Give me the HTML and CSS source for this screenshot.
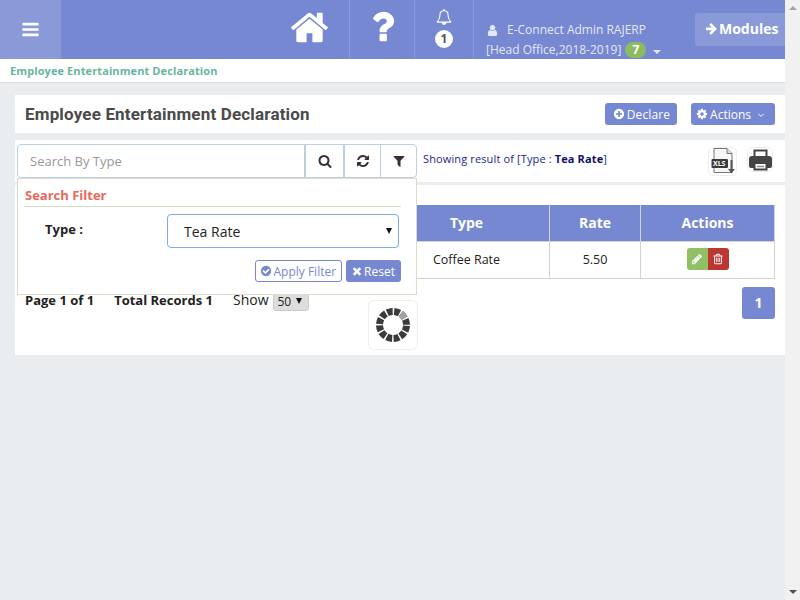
FILE: index.html
```html
<!DOCTYPE html>
<html>
<head>
  <title>Employee Entertainment Declaration</title>
  <link rel="stylesheet" href="styles.css">
</head>
<body>
  <svg class="defs" width="0" height="0">
    <symbol id="i-bars" viewBox="0 0 1792 1792"><path d="M1664 1344v128q0 26-19 45t-45 19h-1408q-26 0-45-19t-19-45v-128q0-26 19-45t45-19h1408q26 0 45 19t19 45zm0-512v128q0 26-19 45t-45 19h-1408q-26 0-45-19t-19-45v-128q0-26 19-45t45-19h1408q26 0 45 19t19 45zm0-512v128q0 26-19 45t-45 19h-1408q-26 0-45-19t-19-45v-128q0-26 19-45t45-19h1408q26 0 45 19t19 45z"/></symbol>
    <symbol id="i-home" viewBox="0 0 1792 1792"><path d="M1472 992v480q0 26-19 45t-45 19h-384v-384h-256v384h-384q-26 0-45-19t-19-45v-480q0-1 .5-3t.5-3l575-474 575 474q1 2 1 6zm223-69l-62 74q-8 9-21 11h-3q-13 0-21-7l-692-577-692 577q-12 8-24 7-13-2-21-11l-62-74q-8-10-7-23.500t11-21.500l719-599q32-26 76-26t76 26l244 204v-195q0-14 9-23t23-9h192q14 0 23 9t9 23v408l219 182q10 8 11 21.500t-7 23.500z"/></symbol>
    <symbol id="i-question" viewBox="0 0 1792 1792"><path d="M1088 1256v240q0 16-12 28t-28 12h-240q-16 0-28-12t-12-28v-240q0-16 12-28t28-12h240q16 0 28 12t12 28zm316-600q0 54-15.500 101t-35 76.500-55 59.500-57.500 43.500-61 35.500q-41 23-68.500 65t-27.500 67q0 17-12 32.500t-28 15.500h-240q-15 0-25.500-18.500t-10.500-37.500v-45q0-83 65-156.500t143-108.500q59-27 84-56t25-76q0-42-46.500-74t-107.500-32q-65 0-108 29-35 25-107 115-13 16-31 16-12 0-25-8l-164-125q-13-10-15.500-25t5.500-28q160-266 464-266 80 0 161 31t146 83 106 127.500 41 158.500z"/></symbol>
    <symbol id="i-bell" viewBox="0 0 1792 1792"><path d="M912 1696q0-16-16-16-59 0-101.500-42.500t-42.500-101.500q0-16-16-16t-16 16q0 73 51.500 124.500t124.500 51.500q16 0 16-16zm-666-288h1300q-266-300-266-832 0-51-24-105t-69-103-121.500-80.500-169.500-31.500-169.500 31.500-121.500 80.500-69 103-24 105q0 532-266 832zm1482 0q0 52-38 90t-90 38h-448q0 106-75 181t-181 75-181-75-75-181h-448q-52 0-90-38t-38-90q50-42 91-88t85-119.500 74.500-158.500 50-206 19.500-260q0-152 117-282.500t307-158.500q-8-19-8-39 0-40 28-68t68-28 68 28 28 68q0 20-8 39 190 28 307 158.500t117 282.500q0 139 19.500 260t50 206 74.500 158.500 85 119.500 91 88z"/></symbol>
    <symbol id="i-user" viewBox="0 0 1792 1792"><path d="M1536 1399q0 109-62.500 187t-150.500 78h-854q-88 0-150.500-78t-62.500-187q0-85 8.500-160.500t31.500-152 58.500-131 94-89 134.500-34.500q131 128 313 128t313-128q76 0 134.500 34.500t94 89 58.500 131 31.500 152 8.500 160.500zm-256-887q0 159-112.500 271.500t-271.500 112.500-271.500-112.500-112.500-271.500 112.500-271.500 271.500-112.500 271.500 112.500 112.500 271.500z"/></symbol>
    <symbol id="i-arrow" viewBox="0 0 1792 1792"><path d="M1600 960q0 54-37 91l-651 651q-39 37-91 37-51 0-90-37l-75-75q-38-38-38-91t38-91l293-293h-704q-52 0-84.500-37.500t-32.500-90.500v-128q0-53 32.500-90.500t84.500-37.500h704l-293-294q-38-36-38-90t38-90l75-75q38-38 90-38 53 0 91 38l651 651q37 35 37 90z"/></symbol>
    <symbol id="i-plus" viewBox="0 0 1792 1792"><path d="M1344 960v-128q0-26-19-45t-45-19h-256v-256q0-26-19-45t-45-19h-128q-26 0-45 19t-19 45v256h-256q-26 0-45 19t-19 45v128q0 26 19 45t45 19h256v256q0 26 19 45t45 19h128q26 0 45-19t19-45v-256h256q26 0 45-19t19-45zm320-64q0 209-103 385.500t-279.500 279.500-385.500 103-385.500-103-279.500-279.500-103-385.500 103-385.500 279.500-279.500 385.500-103 385.500 103 279.500 279.500 103 385.500z"/></symbol>
    <symbol id="i-gear" viewBox="0 0 1792 1792"><path d="M1152 896q0-106-75-181t-181-75-181 75-75 181 75 181 181 75 181-75 75-181zm512-109v222q0 12-8 23t-20 13l-185 28q-19 54-39 91 35 50 107 138 10 12 10 25t-9 23q-27 37-99 108t-94 71q-12 0-26-9l-138-108q-44 23-91 38-16 136-29 186-7 28-36 28h-222q-14 0-24.500-8.500t-11.500-21.500l-28-184q-49-16-90-37l-141 107q-10 9-25 9-14 0-25-11-126-114-165-168-7-10-7-23 0-12 8-23 15-21 51-66.500t54-70.500q-27-50-41-99l-183-27q-13-2-21-12.500t-8-23.500v-222q0-12 8-23t19-13l186-28q14-46 39-92-40-57-107-138-10-12-10-24 0-10 9-23 26-36 98.500-107.500t94.500-71.500q13 0 26 10l138 107q44-23 91-38 16-136 29-186 7-28 36-28h222q14 0 24.500 8.500t11.500 21.500l28 184q49 16 90 37l142-107q9-9 24-9 13 0 25 10 129 119 165 170 7 8 7 22 0 12-8 23-15 21-51 66.500t-54 70.500q26 50 41 98l183 28q13 2 21 12.500t8 23.500z"/></symbol>
    <symbol id="i-angle" viewBox="0 0 1792 1792"><path d="M1395 736q0 13-10 23l-466 466q-10 10-23 10t-23-10l-466-466q-10-10-10-23t10-23l50-50q10-10 23-10t23 10l393 393 393-393q10-10 23-10t23 10l50 50q10 10 10 23z"/></symbol>
    <symbol id="i-search" viewBox="0 0 1792 1792"><path d="M1216 832q0-185-131.500-316.500t-316.500-131.500-316.500 131.500-131.500 316.500 131.500 316.500 316.500 131.500 316.500-131.500 131.500-316.500zm512 832q0 52-38 90t-90 38q-54 0-90-38l-343-342q-179 124-399 124-143 0-273.500-55.500t-225-150-150-225-55.500-273.500 55.500-273.500 150-225 225-150 273.500-55.500 273.500 55.500 225 150 150 225 55.500 273.500q0 220-124 399l343 343q37 37 37 90z"/></symbol>
    <symbol id="i-refresh" viewBox="0 0 1792 1792"><path d="M1639 1056q0 5-1 7-64 268-268 434.500t-478 166.500q-146 0-282.500-55t-243.500-157l-129 129q-19 19-45 19t-45-19-19-45v-448q0-26 19-45t45-19h448q26 0 45 19t19 45-19 45l-137 137q71 66 161 102t187 36q134 0 250-65t186-179q11-17 53-117 8-23 30-23h192q13 0 22.500 9.500t9.500 22.500zm25-800v448q0 26-19 45t-45 19h-448q-26 0-45-19t-19-45 19-45l138-138q-148-137-349-137-134 0-250 65t-186 179q-11 17-53 117-8 23-30 23h-199q-13 0-22.500-9.500t-9.500-22.500v-7q65-268 270-434.500t480-166.500q146 0 284 55.500t245 156.500l130-129q19-19 45-19t45 19 19 45z"/></symbol>
    <symbol id="i-filter" viewBox="0 0 1792 1792"><path d="M1595 295q17 41-14 70l-493 493v742q0 42-39 59-13 5-25 5-27 0-45-19l-256-256q-19-19-19-45v-486l-493-493q-31-29-14-70 17-39 59-39h1280q42 0 59 39z"/></symbol>
    <symbol id="i-check" viewBox="0 0 1792 1792"><path d="M1412 734q0-28-18-46l-91-90q-19-19-45-19t-45 19l-408 407-226-226q-19-19-45-19t-45 19l-91 90q-18 18-18 46 0 27 18 45l362 362q19 19 45 19 27 0 46-19l543-543q18-18 18-45zm252 162q0 209-103 385.500t-279.500 279.500-385.500 103-385.500-103-279.500-279.500-103-385.500 103-385.500 279.500-279.500 385.500-103 385.500 103 279.500 279.500 103 385.500z"/></symbol>
    <symbol id="i-times" viewBox="0 0 1792 1792"><path d="M1490 1322q0 40-28 68l-136 136q-28 28-68 28t-68-28l-294-294-294 294q-28 28-68 28t-68-28l-136-136q-28-28-28-68t28-68l294-294-294-294q-28-28-28-68t28-68l136-136q28-28 68-28t68 28l294 294 294-294q28-28 68-28t68 28l136 136q28 28 28 68t-28 68l-294 294 294 294q28 28 28 68z"/></symbol>
    <symbol id="i-pencil" viewBox="0 0 1792 1792"><path d="M491 1536l91-91-235-235-91 91v107h128v128h107zm523-928q0-22-22-22-10 0-17 7l-542 542q-7 7-7 17 0 22 22 22 10 0 17-7l542-542q7-7 7-17zm-54-192l416 416-832 832h-416v-416zm683 96q0 53-37 90l-166 166-416-416 166-165q36-38 90-38 53 0 91 38l235 234q37 39 37 91z"/></symbol>
    <symbol id="i-trash" viewBox="0 0 1792 1792"><path d="M704 736v576q0 14-9 23t-23 9h-64q-14 0-23-9t-9-23v-576q0-14 9-23t23-9h64q14 0 23 9t9 23zm256 0v576q0 14-9 23t-23 9h-64q-14 0-23-9t-9-23v-576q0-14 9-23t23-9h64q14 0 23 9t9 23zm256 0v576q0 14-9 23t-23 9h-64q-14 0-23-9t-9-23v-576q0-14 9-23t23-9h64q14 0 23 9t9 23zm128 724v-948h-896v948q0 22 7 40.500t14.500 27 10.500 8.500h832q3 0 10.500-8.500t14.500-27 7-40.500zm-672-1076h448l-48-117q-7-9-17-11h-317q-10 2-17 11zm928 32v64q0 14-9 23t-23 9h-96v948q0 83-47 143.500t-113 60.500h-832q-66 0-113-58.500t-47-141.500v-952h-96q-14 0-23-9t-9-23v-64q0-14 9-23t23-9h309l70-167q15-37 54-63t79-26h320q40 0 79 26t54 63l70 167h309q14 0 23 9t9 23z"/></symbol>
  </svg>

  <div class="page">
    <header class="topbar">
      <a class="burger"><svg class="ico"><use href="#i-bars"/></svg></a>
      <div class="topbar-space"></div>
      <a class="nav-cell nav-home"><svg class="ico"><use href="#i-home"/></svg></a>
      <a class="nav-cell nav-help"><svg class="ico"><use href="#i-question"/></svg></a>
      <a class="nav-cell nav-bell">
        <svg class="ico"><use href="#i-bell"/></svg>
        <span class="bell-count">1</span>
      </a>
      <div class="user-box">
        <div class="user-name"><svg class="ico"><use href="#i-user"/></svg>E-Connect Admin RAJERP</div>
        <div class="user-org">[Head Office,2018-2019] <span class="org-count">7</span><span class="caret"></span></div>
      </div>
      <a class="modules"><svg class="ico"><use href="#i-arrow"/></svg>Modules</a>
    </header>

    <div class="breadcrumb">Employee Entertainment Declaration</div>

    <main class="content">
      <section class="title-card">
        <h1>Employee Entertainment Declaration</h1>
        <div class="title-actions">
          <a class="btn btn-declare"><svg class="ico"><use href="#i-plus"/></svg>Declare</a>
          <a class="btn btn-actions"><svg class="ico"><use href="#i-gear"/></svg>Actions<svg class="ico ico-angle"><use href="#i-angle"/></svg></a>
        </div>
      </section>

      <section class="search-card">
        <div class="search-wrap">
          <div class="search-group">
            <input class="search-input" type="text" placeholder="Search By Type">
            <a class="search-btn search-btn-a"><svg class="ico"><use href="#i-search"/></svg></a>
            <a class="search-btn search-btn-b"><svg class="ico"><use href="#i-refresh"/></svg></a>
            <a class="search-btn search-btn-c"><svg class="ico"><use href="#i-filter"/></svg></a>
          </div>
          <div class="filter-panel">
            <div class="filter-title">Search Filter</div>
            <div class="filter-row">
              <label class="filter-label">Type :</label>
              <select class="filter-select"><option>Tea Rate</option></select>
            </div>
            <div class="filter-buttons">
              <a class="btn-outline"><svg class="ico"><use href="#i-check"/></svg>Apply Filter</a>
              <a class="btn btn-reset"><svg class="ico"><use href="#i-times"/></svg>Reset</a>
            </div>
          </div>
        </div>
        <p class="result-text">Showing result of [Type : <b>Tea Rate</b>]</p>
        <div class="export-icons">
          <a class="export-btn export-xls">
            <svg width="26" height="27" viewBox="0 0 26 27">
              <path d="M4 .5h13l5 5v19h-18z" fill="#f6f6f6" stroke="#777"/>
              <path d="M17 .5v5h5" fill="#ddd" stroke="#777"/>
              <rect x="1.500" y="11" width="16.500" height="9" rx="1" fill="#3d3d3d"/>
              <text x="3" y="18.200" class="xls-text">XLS</text>
              <path d="M20.500 12h2v9h2.500l-3.500 4.500-3.500-4.500h2.500z" fill="#555"/>
            </svg>
          </a>
          <a class="export-btn export-print">
            <svg width="23" height="22" viewBox="0 0 23 22">
              <path d="M5.500 1.500h12v7h-12z" fill="#fff" stroke="#444" stroke-width="2"/>
              <path d="M3 7h17q3 0 3 3v7q0 2-2 2h-3v-4h-13v4h-3q-2 0-2-2v-7q0-3 3-3z" fill="#444"/>
              <path d="M5.500 14h12v6.500h-12z" fill="#fff" stroke="#444" stroke-width="2"/>
              <path d="M8 17.500h7" stroke="#888" stroke-width="1.500"/>
            </svg>
          </a>
        </div>
      </section>

      <section class="list-card">
        <table class="data-table">
          <thead>
            <tr><th class="col-hidden"></th><th class="col-type">Type</th><th class="col-rate">Rate</th><th>Actions</th></tr>
          </thead>
          <tbody>
            <tr>
              <td></td>
              <td>Coffee Rate</td>
              <td>5.50</td>
              <td>
                <div class="row-actions">
                  <a class="row-btn row-edit"><svg class="ico"><use href="#i-pencil"/></svg></a>
                  <a class="row-btn row-delete"><svg class="ico"><use href="#i-trash"/></svg></a>
                </div>
              </td>
            </tr>
          </tbody>
        </table>
        <div class="list-footer">
          <div class="page-info">
            <b>Page 1 of 1</b>
            <b class="total">Total Records 1</b>
            <span class="show">Show</span>
            <select class="show-select"><option>50</option></select>
          </div>
          <a class="page-num">1</a>
        </div>
      </section>

      <div class="spinner">
        <svg width="38" height="38" viewBox="0 0 38 38">
          <circle class="spin-ring" cx="19" cy="19" r="13.500"/>
          <circle class="spin-active" cx="19" cy="19" r="13.500"/>
        </svg>
      </div>
    </main>
  </div>

  <div class="scrollbar">
    <span class="scroll-up"></span>
    <span class="scroll-down"></span>
  </div>
</body>
</html>
```
FILE: styles.css
```css
html {
  overflow: hidden;
}

body {
  margin: 0;
  height: 100vh;
  display: flex;
  background-color: #e9edf0;
  font-family: "Open Sans", sans-serif;
  font-size: 12px;
  color: #222;
}

.defs {
  position: absolute;
}

.page {
  flex: 1;
  min-width: 0;
}

.scrollbar {
  width: 15px;
  box-sizing: border-box;
  padding: 6px 0;
  background-color: #f1f1f1;
  display: flex;
  flex-direction: column;
  align-items: center;
  justify-content: space-between;
}

.scroll-up {
  border-bottom: 4px solid #a3a3a3;
  border-left: 4px solid transparent;
  border-right: 4px solid transparent;
}

.scroll-down {
  border-top: 4px solid #505050;
  border-left: 4px solid transparent;
  border-right: 4px solid transparent;
}

.ico {
  width: 1em;
  height: 1em;
  fill: currentColor;
  flex: none;
}

/* top bar */
.topbar {
  display: flex;
  height: 59px;
  background-color: #7688d2;
  color: #fff;
}

.burger {
  width: 61px;
  background-color: #8a9ad9;
  display: flex;
  align-items: center;
  justify-content: center;
  font-size: 19px;
}

.topbar-space {
  flex: 1;
}

.nav-cell {
  display: flex;
  flex-direction: column;
  align-items: center;
  box-sizing: border-box;
  border-right: 1px solid #8a9ad9;
}

.nav-home {
  width: 61px;
  padding-top: 7px;
  font-size: 41px;
  align-items: flex-start;
}

.nav-help {
  width: 65px;
  padding-top: 6px;
  font-size: 41px;
}

.nav-bell {
  width: 60px;
  margin-left: -1px;
  padding-top: 9px;
  border-left: 1px solid #8a9ad9;
  font-size: 16px;
}

.bell-count {
  width: 18px;
  height: 18px;
  margin-top: 5px;
  border-radius: 50%;
  background-color: #fff;
  color: #555;
  font-size: 12px;
  font-weight: 700;
  line-height: 18px;
  text-align: center;
}

.user-box {
  width: 221px;
  box-sizing: border-box;
  padding: 20px 0 0 12px;
  color: #e3e7f7;
  font-size: 12px;
  line-height: 20px;
}

.user-name {
  display: flex;
  align-items: center;
}

.user-name .ico {
  width: 13px;
  height: 13px;
  margin-right: 8px;
}

.user-org {
  display: flex;
  align-items: center;
  white-space: pre;
}

.org-count {
  width: 21px;
  height: 16px;
  margin-left: 1px;
  border-radius: 8px;
  background-color: #8bbd60;
  color: #fff;
  font-weight: 700;
  line-height: 16px;
  text-align: center;
}

.caret {
  margin: 3px 0 0 7px;
  border-top: 4px solid #e3e7f7;
  border-left: 4px solid transparent;
  border-right: 4px solid transparent;
}

.modules {
  width: 90px;
  height: 33px;
  margin-top: 13px;
  box-sizing: border-box;
  padding: 0 0 2px 10px;
  background-color: #8a9ad9;
  border-radius: 3px 0 0 3px;
  display: flex;
  align-items: center;
  font-size: 14px;
  font-weight: 700;
}

.modules .ico {
  width: 13px;
  height: 13px;
  margin-right: 1px;
}

.breadcrumb {
  height: 24px;
  box-sizing: border-box;
  padding: 4px 10px 0;
  background-color: #fff;
  border-bottom: 1px solid #dcdfe2;
  color: #67b5a0;
  font-size: 11px;
  font-weight: 700;
  letter-spacing: 0.1px;
}

.content {
  position: relative;
  padding: 12px 0 0 15px;
}

/* title */
.title-card {
  height: 38px;
  box-sizing: border-box;
  padding: 0 10px;
  background-color: #fff;
  display: flex;
  align-items: center;
  justify-content: space-between;
}

h1 {
  margin: 0;
  font-family: Roboto, sans-serif;
  font-size: 17px;
  font-weight: 700;
  letter-spacing: 0.17px;
  color: #4a4a4a;
}

.title-actions {
  display: flex;
  gap: 14px;
}

.btn {
  height: 22px;
  background-color: #7688d2;
  border-radius: 3px;
  color: #fff;
  font-size: 12px;
  display: flex;
  align-items: center;
}

.btn .ico {
  width: 12px;
  height: 12px;
  margin-right: 2px;
}

.btn-declare {
  padding: 0 7px 0 8px;
  letter-spacing: 0.1px;
}

.btn-actions {
  padding: 0 9px 0 5px;
}

.btn-actions .ico-angle {
  width: 10px;
  height: 10px;
  margin: 1px 0 0 5px;
}

/* search */
.search-card {
  height: 42px;
  margin-top: 7px;
  background-color: #fff;
  display: flex;
  position: relative;
  z-index: 2;
}

.search-wrap {
  width: 400px;
  margin: 4px 0 0 2px;
  position: relative;
}

.search-group {
  height: 34px;
  box-sizing: border-box;
  display: flex;
  border: 1px solid #c0cfdf;
  border-radius: 4px;
}

.search-input {
  flex: 1;
  min-width: 0;
  border: none;
  outline: none;
  padding: 0 12px;
  background: transparent;
  font-family: "Open Sans", sans-serif;
  font-size: 13px;
}

.search-input::placeholder {
  color: #999;
}

.search-btn {
  box-sizing: border-box;
  border-left: 2px solid #c0cfdf;
  display: flex;
  align-items: center;
  justify-content: center;
  font-size: 14px;
  color: #333;
}

.search-btn-a {
  width: 39px;
}

.search-btn-b {
  width: 37px;
}

.search-btn-c {
  width: 36px;
  border-left-width: 1px;
}

.filter-panel {
  position: absolute;
  top: 34px;
  left: 0;
  right: 0;
  height: 117px;
  box-sizing: border-box;
  padding: 8px 15px 0 6px;
  background-color: #fff;
  border: 1px solid #dcdcc8;
}

.filter-title {
  height: 19px;
  padding-left: 1px;
  border-bottom: 1px solid #dcdcc8;
  color: #e8685a;
  font-size: 13px;
  font-weight: 700;
  line-height: 16px;
}

.filter-row {
  display: flex;
  margin-top: 7px;
}

.filter-label {
  width: 143px;
  padding: 6px 0 0 21px;
  box-sizing: border-box;
  font-size: 13px;
  font-weight: 700;
  color: #222;
}

.filter-select {
  width: 232px;
  height: 34px;
  padding: 0 16px;
  border: 1px solid #7cace6;
  border-radius: 4px;
  appearance: none;
  background: #fff url("data:image/svg+xml,%3Csvg xmlns='http://www.w3.org/2000/svg' width='6' height='6'%3E%3Cpath d='M0 0h6l-3 6z' fill='%23111'/%3E%3C/svg%3E") no-repeat right 6px center;
  font-family: "Open Sans", sans-serif;
  font-size: 14px;
  color: #222;
}

.filter-buttons {
  display: flex;
  justify-content: flex-end;
  gap: 4px;
  margin-top: 12px;
}

.btn-outline {
  height: 22px;
  box-sizing: border-box;
  padding: 0 5px 0 4px;
  border: 1px solid #7688d2;
  border-radius: 3px;
  color: #7688d2;
  display: flex;
  align-items: center;
  font-size: 12px;
}

.btn-outline .ico {
  width: 12px;
  height: 12px;
  margin-right: 2px;
}

.btn-reset {
  padding: 0 6px 0 5px;
}

.btn-reset .ico {
  margin-right: 1px;
}

.result-text {
  margin: 11px 0 0 6px;
  flex: 1;
  font-size: 11px;
  letter-spacing: 0.13px;
  color: #1c1f8a;
}

.result-text b {
  color: #10106e;
}

.export-icons {
  display: flex;
  gap: 10px;
  margin: 7px 12px 0 0;
  align-items: flex-start;
}

.export-btn {
  box-sizing: border-box;
  border: 1px solid #eee;
  border-radius: 5px;
  display: flex;
  align-items: center;
  justify-content: center;
}

.export-xls {
  width: 29px;
  height: 29px;
}

.export-print {
  width: 26px;
  height: 25px;
}

.xls-text {
  font-family: "Open Sans", sans-serif;
  font-size: 7px;
  font-weight: 700;
  fill: #fff;
}

/* list */
.list-card {
  height: 170px;
  margin-top: 3px;
  box-sizing: border-box;
  padding: 20px 10px 0;
  background-color: #fff;
}

.data-table {
  width: 750px;
  border-collapse: collapse;
  table-layout: fixed;
}

.data-table th {
  height: 34px;
  padding: 0 0 2px;
  background-color: #7688d2;
  border: 1px solid #d3d3d3;
  border-top: none;
  color: #fff;
  font-size: 14px;
  font-weight: 700;
}

.data-table td {
  height: 34px;
  padding: 0 0 2px;
  border: 1px solid #d3d3d3;
  font-size: 12.5px;
  text-align: center;
}

.col-hidden {
  width: 357px;
}

.col-type {
  width: 165px;
}

.col-rate {
  width: 90px;
}

.row-actions {
  display: flex;
  justify-content: center;
}

.row-btn {
  width: 21px;
  height: 22px;
  display: flex;
  align-items: center;
  justify-content: center;
  color: #fff;
  font-size: 12px;
}

.row-edit {
  background-color: #8fc064;
  border-radius: 3px 0 0 3px;
}

.row-delete {
  background-color: #bd3632;
  border-radius: 0 3px 3px 0;
}

.list-footer {
  display: flex;
  justify-content: space-between;
  margin-top: 8px;
}

.page-info {
  display: flex;
  align-items: flex-start;
  padding-top: 4px;
  font-size: 13px;
  color: #222;
}

.total {
  margin-left: 20px;
}

.show {
  margin-left: 20px;
  font-size: 14px;
  line-height: 17px;
}

.show-select {
  width: 36px;
  height: 20px;
  margin: 0 0 0 4px;
  padding: 0 0 0 4px;
  border: 1px solid #ccc;
  border-radius: 3px;
  appearance: none;
  background: #ddd url("data:image/svg+xml,%3Csvg xmlns='http://www.w3.org/2000/svg' width='6' height='6'%3E%3Cpath d='M0 0h6l-3 6z' fill='%23111'/%3E%3C/svg%3E") no-repeat right 6px center;
  font-family: "Open Sans", sans-serif;
  font-size: 12px;
  color: #222;
}

.page-num {
  width: 33px;
  height: 32px;
  background-color: #7688d2;
  border-radius: 3px;
  color: #fff;
  font-size: 14px;
  font-weight: 700;
  line-height: 32px;
  text-align: center;
}

/* loader */
.spinner {
  position: absolute;
  left: 368px;
  top: 217px;
  width: 50px;
  height: 50px;
  box-sizing: border-box;
  border: 1px solid #eee;
  border-radius: 6px;
  background-color: #fff;
  display: flex;
  align-items: center;
  justify-content: center;
  z-index: 3;
}

.spin-ring {
  fill: none;
  stroke: #3b3b3b;
  stroke-width: 7;
  stroke-dasharray: 5.57 1.5;
  stroke-dashoffset: -0.75;
}

.spin-active {
  fill: none;
  stroke: #a3a3a3;
  stroke-width: 7;
  stroke-dasharray: 5.57 79.25;
  stroke-dashoffset: 13.39;
}
```
